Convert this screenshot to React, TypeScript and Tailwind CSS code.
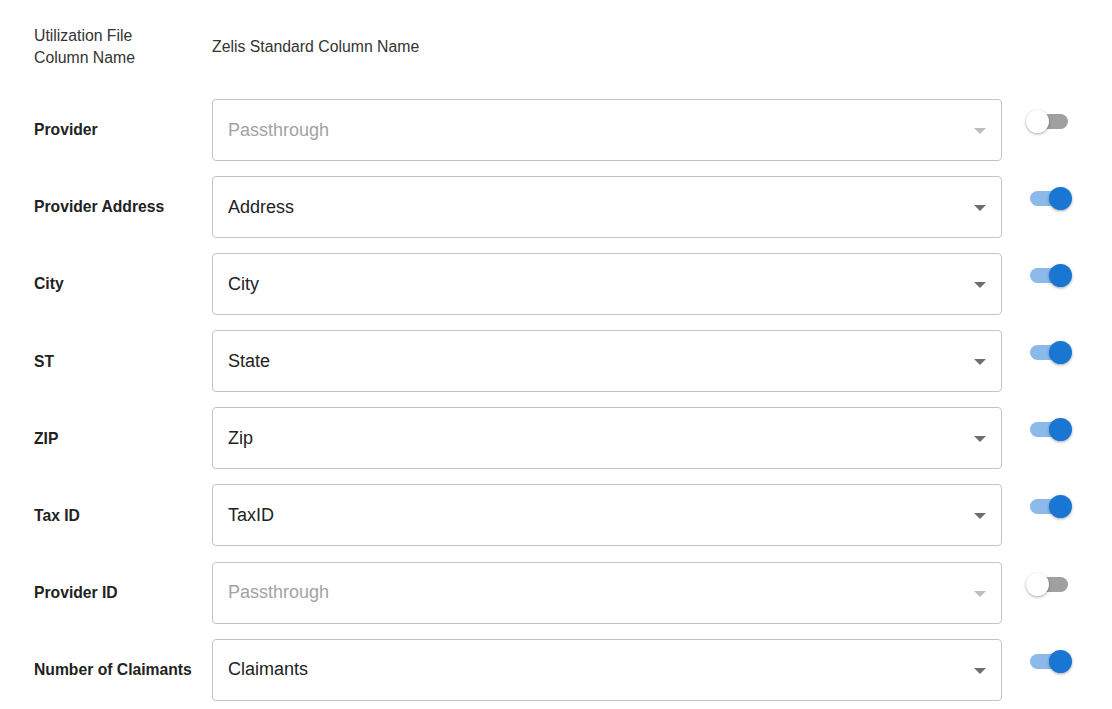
import React from "react";

type Row = { label: string; value: string; on: boolean };

const rows: Row[] = [
  { label: "Provider", value: "Passthrough", on: false },
  { label: "Provider Address", value: "Address", on: true },
  { label: "City", value: "City", on: true },
  { label: "ST", value: "State", on: true },
  { label: "ZIP", value: "Zip", on: true },
  { label: "Tax ID", value: "TaxID", on: true },
  { label: "Provider ID", value: "Passthrough", on: false },
  { label: "Number of Claimants", value: "Claimants", on: true },
];

function Switch({ on }: { on: boolean }) {
  return (
    <div className="relative w-[46px] h-[23px] mt-[11px]">
      <div
        className={
          "absolute left-[4px] top-[4px] w-[38px] h-[15px] rounded-full " +
          (on ? "bg-[#8bb9ea]" : "bg-[#a0a0a0]")
        }
      />
      <div
        className={
          "absolute top-0 w-[23px] h-[23px] rounded-full shadow-[0_1px_3px_rgba(0,0,0,0.35)] " +
          (on ? "left-[23px] bg-[#1976d2]" : "left-0 bg-white")
        }
      />
    </div>
  );
}

export default function App() {
  return (
    <div
      className="w-[1112px] h-[709px] bg-white text-[#222] overflow-hidden"
      style={{ fontFamily: '"Liberation Sans", Arial, sans-serif' }}
    >
      <div className="flex pl-[34px] pt-[25px] h-[99px] items-start">
        <div className="w-[178px] text-[15.8px] leading-[22px] text-[#333]">
          Utilization File
          <br />
          Column Name
        </div>
        <div className="text-[15.8px] leading-[22px] text-[#333] mt-[11px]">
          Zelis Standard Column Name
        </div>
      </div>
      <div className="flex flex-col gap-[15.1px] pl-[34px]">
        {rows.map((r) => (
          <div key={r.label} className="flex items-start">
            <div className="w-[178px] h-[62px] flex items-center font-bold text-[15.7px] text-[#222]">
              {r.label}
            </div>
            <div className="w-[790px] h-[62px] border border-[#c4c4c4] rounded-[4px] flex items-center justify-between pl-[15px] pr-[15px]">
              <span
                className={
                  "text-[18px] " + (r.on ? "text-[#222]" : "text-[#a3a3a3]")
                }
              >
                {r.value}
              </span>
              <svg width="12" height="6" viewBox="0 0 12 6" className="mt-[2px]">
                <path d="M0 0 L12 0 L6 6 Z" fill={r.on ? "#6e6e6e" : "#bdbdbd"} />
              </svg>
            </div>
            <div className="ml-[24px]">
              <Switch on={r.on} />
            </div>
          </div>
        ))}
      </div>
    </div>
  );
}
